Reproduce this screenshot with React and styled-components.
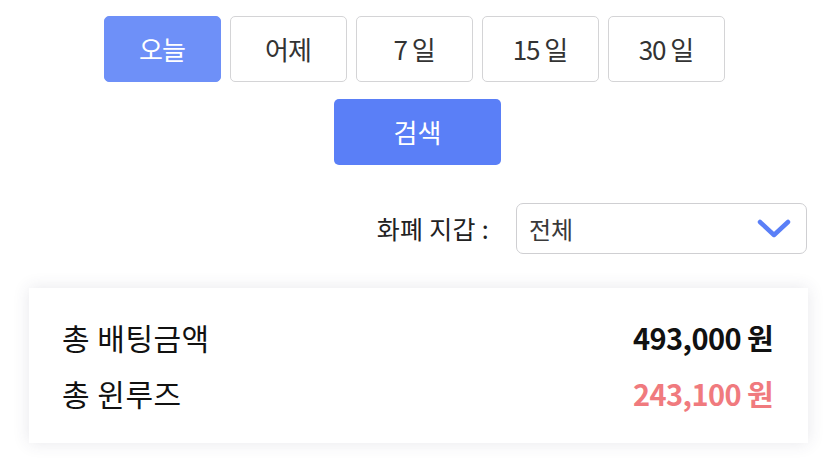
import React, { useState } from "react";
import styled, { createGlobalStyle } from "styled-components";

const Global = createGlobalStyle`
  html, body { margin: 0; padding: 0; background: #ffffff; }
  body { font-family: "Noto Sans CJK KR", "Noto Sans", sans-serif; color: #222; }
  * { box-sizing: border-box; }
`;

const Page = styled.div`
  width: 835px;
  height: 464px;
  overflow: hidden;
  padding-top: 16px;
  display: flex;
  flex-direction: column;
`;

const DateRow = styled.div`
  display: flex;
  justify-content: center;
  gap: 9px;
  padding-right: 7px;
`;

const DateButton = styled.button`
  width: 117px;
  height: 66px;
  border-radius: 5px;
  font-family: inherit;
  font-size: 26px;
  letter-spacing: -1px;
  border: 1px solid ${(p) => (p.$active ? "#6e90f8" : "#d4d4d6")};
  background: ${(p) => (p.$active ? "#6e90f8" : "#ffffff")};
  color: ${(p) => (p.$active ? "#ffffff" : "#333333")};
  display: flex;
  align-items: center;
  justify-content: center;
  padding: 0 0 2px;
  cursor: pointer;
`;

const SearchRow = styled.div`
  display: flex;
  justify-content: center;
  margin-top: 17px;
`;

const SearchButton = styled.button`
  width: 167px;
  height: 66px;
  border: none;
  border-radius: 5px;
  background: #5a7ff7;
  color: #ffffff;
  font-family: inherit;
  font-size: 26px;
  padding: 0 0 2px;
  cursor: pointer;
`;

const WalletRow = styled.div`
  display: flex;
  justify-content: flex-end;
  align-items: center;
  gap: 27px;
  margin-top: 38px;
  padding-right: 28px;
`;

const WalletLabel = styled.span`
  font-size: 25px;
  color: #222;
  letter-spacing: 0.3px;
  padding-bottom: 2px;
`;

const Select = styled.div`
  width: 291px;
  height: 51px;
  border: 1px solid #cfcfd2;
  border-radius: 7px;
  display: flex;
  align-items: center;
  justify-content: space-between;
  padding: 0 14px 0 12px;
  font-size: 24px;
  color: #3a3a3a;
`;

const Card = styled.div`
  margin: 34px 27px 0 29px;
  height: 155px;
  background: #ffffff;
  box-shadow: 0 0 16px rgba(60, 60, 90, 0.12);
  padding: 21px 35px 22px 33px;
  display: flex;
  flex-direction: column;
`;

const SummaryRow = styled.div`
  height: 56px;
  display: flex;
  align-items: center;
  justify-content: space-between;
`;

const SummaryLabel = styled.span`
  font-size: 30px;
  color: #111;
  letter-spacing: 0.5px;
`;

const SummaryValue = styled.span`
  font-size: 29px;
  font-weight: 700;
  letter-spacing: -0.6px;
  color: ${(p) => p.$color};
`;

const Chevron = () => (
  <svg width="36" height="22" viewBox="0 0 36 22" fill="none">
    <path d="M4 4 L18 17 L32 4" stroke="#5a7ff7" strokeWidth="4.5" strokeLinecap="round" strokeLinejoin="round" />
  </svg>
);

const ranges = ["오늘", "어제", "7 일", "15 일", "30 일"];

export default function App() {
  const [active, setActive] = useState(0);
  return (
    <>
      <Global />
      <Page>
        <DateRow>
          {ranges.map((r, i) => (
            <DateButton key={r} $active={i === active} onClick={() => setActive(i)}>
              {r}
            </DateButton>
          ))}
        </DateRow>
        <SearchRow>
          <SearchButton>검색</SearchButton>
        </SearchRow>
        <WalletRow>
          <WalletLabel>화폐 지갑 :</WalletLabel>
          <Select>
            <span>전체</span>
            <Chevron />
          </Select>
        </WalletRow>
        <Card>
          <SummaryRow>
            <SummaryLabel>총 배팅금액</SummaryLabel>
            <SummaryValue $color="#111111">493,000 원</SummaryValue>
          </SummaryRow>
          <SummaryRow>
            <SummaryLabel>총 윈루즈</SummaryLabel>
            <SummaryValue $color="#f07a7e">243,100 원</SummaryValue>
          </SummaryRow>
        </Card>
      </Page>
    </>
  );
}
